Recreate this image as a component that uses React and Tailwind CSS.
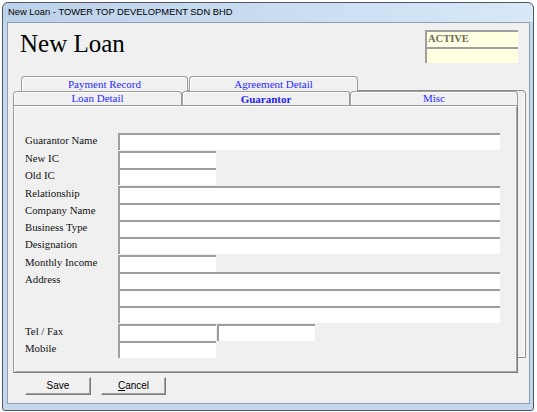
const serif = { fontFamily: '"Liberation Serif", "Times New Roman", serif' };

const BackTab = ({ label, className }) => (
  <div
    className={`h-[15px] rounded-t-[4px] border border-b-0 border-[#9b9b9b] bg-[#f0f0f0] shadow-[inset_1px_1px_0_#ffffff] text-center text-[11px] leading-[14px] text-[#2a2aff] ${className}`}
  >
    {label}
  </div>
);

const FrontTab = ({ label, className, selected }) =>
  selected ? (
    <div
      className={`relative z-20 -mb-px h-[15px] rounded-t-[3px] border border-b-0 border-[#9b9b9b] bg-[#f0f0f0] shadow-[inset_1px_1px_0_#ffffff] text-center text-[11px] font-bold leading-[14px] text-[#1c1cf0] ${className}`}
    >
      {label}
    </div>
  ) : (
    <div
      className={`h-[14px] rounded-t-[4px] border border-b-0 border-[#9b9b9b] bg-[#f0f0f0] shadow-[inset_1px_1px_0_#ffffff] text-center text-[11px] leading-[13px] text-[#2a2aff] ${className}`}
    >
      {label}
    </div>
  );

const Field = ({ className = "w-[382px]" }) => (
  <div className={`h-[17px] border-t-2 border-l-2 border-[#9e9e9e] bg-white ${className}`} />
);

const Row = ({ label, children, className = "" }) => (
  <div className={`flex h-[17px] ${className}`}>
    <div className="w-[93px] text-[10.8px] leading-[14px] text-[#111]">{label}</div>
    {children}
  </div>
);

const Button = ({ children, className }) => (
  <button
    type="button"
    className={`h-[18px] border border-t-[#f4f4f4] border-l-[#f4f4f4] border-r-[#7a7a7a] border-b-[#7a7a7a] bg-[#f0f0f0] shadow-[inset_-1px_-1px_0_#a0a0a0] text-[10px] leading-[14px] text-black ${className}`}
    style={{ fontFamily: '"Liberation Sans", Arial, sans-serif' }}
  >
    {children}
  </button>
);

export default function App() {
  return (
    <div className="flex h-[412px] w-[537px] bg-white pt-[2px] pb-[1px] pl-[2px] pr-[3px]">
      <div className="flex flex-1 flex-col rounded-t-[6px] rounded-b-[3px] border border-[#4f5761] bg-[#c3d7ed]">
        {/* title bar */}
        <div
          className="flex h-[19px] items-center rounded-t-[6px] bg-gradient-to-r from-[#bcd2ea] via-[#c9dcf1] to-[#d8e8f8] pl-[5px] text-[9.4px] text-black"
          style={{ fontFamily: '"Liberation Sans", Arial, sans-serif' }}
        >
          New Loan - TOWER TOP DEVELOPMENT SDN BHD
        </div>

        {/* client area */}
        <div className="mb-[6px] ml-[4px] mr-[3px] flex flex-1 flex-col border border-[#8f9db0] bg-[#f0f0f0]" style={serif}>
          {/* header */}
          <div className="flex h-[53px] items-start justify-between pl-[12px] pr-[11px]">
            <div className="mt-[8px] text-[25px] leading-none text-black">New Loan</div>
            <div className="mt-[7px] flex w-[93px] flex-col">
              <div className="h-[17px] border-t-2 border-l-2 border-[#9e9e9e] bg-[#ffffe1] pl-[1px] text-[10.5px] font-bold leading-[14px] text-[#6a6a5a]">
                ACTIVE
              </div>
              <div className="h-[16px] border-t-2 border-l-2 border-[#9e9e9e] bg-[#ffffe1]" />
            </div>
          </div>

          {/* tabs */}
          <div className="relative">
            <div className="absolute left-[13px] top-[14px] h-[268px] w-[505px] rounded-tr-[4px] border border-[#8c8c8c] shadow-[inset_-1px_-1px_0_#ffffff]" />
            <div className="relative ml-[13px] flex">
              <BackTab label="Payment Record" className="w-[167px]" />
              <BackTab label="Agreement Detail" className="ml-px w-[169px]" />
            </div>
            <div className="relative z-10 ml-[5px] flex items-end">
              <FrontTab label="Loan Detail" className="w-[169px]" />
              <FrontTab label="Guarantor" className="w-[168px]" selected />
              <FrontTab label="Misc" className="w-[168px]" />
            </div>
            <div className="relative z-10 ml-[5px] h-[268px] w-[505px] border border-t-[#9b9b9b] border-l-[#9b9b9b] border-r-[#7c7c7c] border-b-[#7c7c7c] bg-[#f0f0f0] pl-[11px] pt-[27px] shadow-[inset_1px_1px_0_#ffffff,inset_-1px_-1px_0_#a8a8a8]">
              <Row label="Guarantor Name">
                <Field />
              </Row>
              <Row label="New IC" className="mt-[1px]">
                <Field className="w-[98px]" />
              </Row>
              <Row label="Old IC">
                <Field className="w-[98px]" />
              </Row>
              <Row label="Relationship" className="mt-[1px]">
                <Field />
              </Row>
              <Row label="Company Name">
                <Field />
              </Row>
              <Row label="Business Type">
                <Field />
              </Row>
              <Row label="Designation">
                <Field />
              </Row>
              <Row label="Monthly Income" className="mt-[1px]">
                <Field className="w-[98px]" />
              </Row>
              <Row label="Address">
                <Field />
              </Row>
              <Row label="">
                <Field />
              </Row>
              <Row label="">
                <Field />
              </Row>
              <Row label="Tel / Fax" className="mt-[1px]">
                <Field className="w-[98px]" />
                <Field className="ml-px w-[98px]" />
              </Row>
              <Row label="Mobile">
                <Field className="w-[98px]" />
              </Row>
            </div>
          </div>

          {/* buttons */}
          <div className="ml-[17px] mt-[4px] flex">
            <Button className="w-[66px]">Save</Button>
            <Button className="ml-[10px] w-[65px]">
              <span className="underline">C</span>ancel
            </Button>
          </div>
        </div>
      </div>
    </div>
  );
}
